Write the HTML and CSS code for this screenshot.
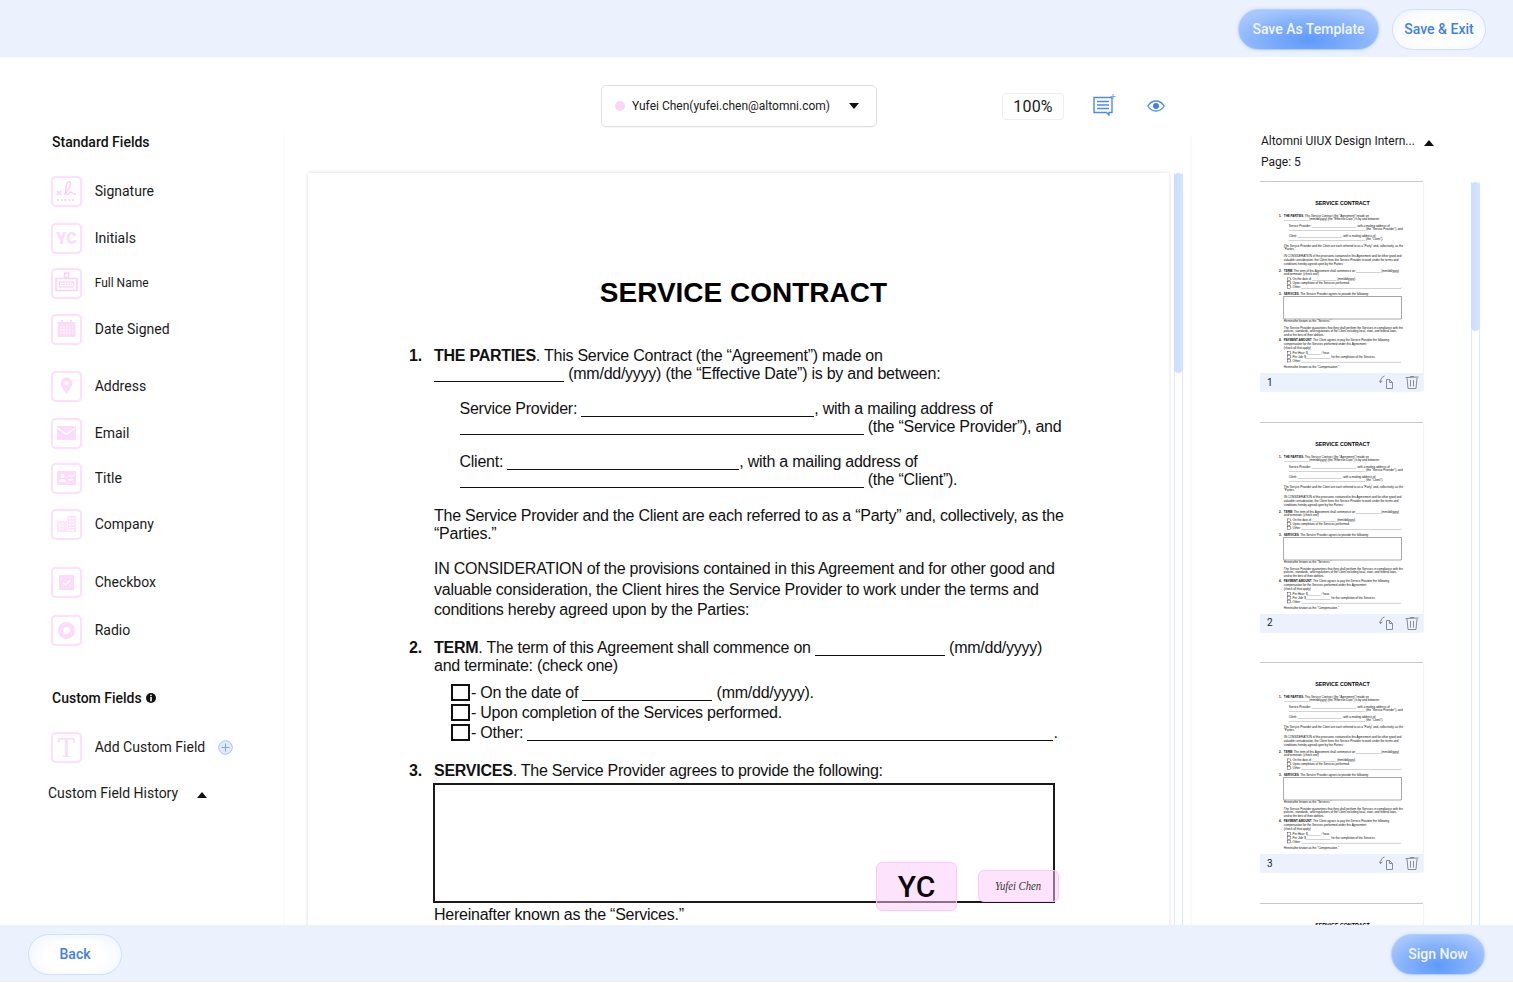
FILE: index.html
```html
<!DOCTYPE html>
<html lang="en">
<head>
<meta charset="utf-8">
<title>Service Contract - Prepare</title>
<link rel="stylesheet" href="styles.css">
</head>
<body>
<div class="app">
  <header class="topbar">
    <button class="btn btn-primary btn-template">Save As Template</button>
    <button class="btn btn-ghost btn-exit">Save &amp; Exit</button>
  </header>

  <main class="main">
    <aside class="left">
      <h2 class="heading">Standard Fields</h2>
      <div class="fields">
        <div class="field"><span class="ficon"><svg viewBox="0 0 27 27"><path class="st" d="M4 13l4 4M8 13l-4 4"/><path class="st" d="M11 17c3-3 8-10 6-13-3-2-5 6-4 11 1 4 4-1 5-1s1 3 5 2"/><path class="dots" d="M4 22h19"/></svg></span><span>Signature</span></div>
        <div class="field"><span class="ficon yc">YC</span><span>Initials</span></div>
        <div class="field small"><span class="ficon"><svg viewBox="0 0 27 27"><rect class="st" x="11.500" y="3" width="4" height="5"/><rect class="st" x="3" y="8.500" width="21" height="12"/><rect class="st thin" x="6.500" y="12" width="14" height="5"/><path class="dots tiny" d="M8 14.500h11"/></svg></span><span>Full Name</span></div>
        <div class="field"><span class="ficon"><svg viewBox="0 0 27 27"><rect class="fl" x="4.500" y="6" width="18" height="15"/><rect class="fl" x="8" y="4" width="2" height="4"/><rect class="fl" x="17" y="4" width="2" height="4"/><path class="wh-dots" d="M7 11h13M7 14h13M7 17h13"/></svg></span><span>Date Signed</span></div>
        <div class="field"><span class="ficon"><svg viewBox="0 0 27 27"><path class="fl" d="M13.500 20.500c-1-1.500-6-7-6-10a6 6 0 1 1 12 0c0 3-5 8.500-6 10z"/><circle class="wh" cx="13.500" cy="10.500" r="2.300"/></svg></span><span>Address</span></div>
        <div class="field"><span class="ficon"><svg viewBox="0 0 27 27"><rect class="fl" x="4" y="6" width="19" height="14" rx="1"/><path class="wl" d="M4.500 8l9 6 9-6"/></svg></span><span>Email</span></div>
        <div class="field"><span class="ficon"><svg viewBox="0 0 27 27"><rect class="fl" x="4" y="6" width="19" height="14" rx="1"/><circle class="wh" cx="9.500" cy="11" r="2"/><path class="wh" d="M6 17c0-4 7-4 7 0z"/><path class="wl" d="M15 11h5M15 14.500h5"/></svg></span><span>Title</span></div>
        <div class="field"><span class="ficon"><svg viewBox="0 0 27 27"><rect class="fl pale" x="4" y="10" width="10" height="11"/><rect class="fl pale" x="14.500" y="5" width="8.500" height="16"/><path class="wh-dots" d="M6 13h6M6 15.500h6M6 18h6M16 7.500h6M16 10.500h6M16 13.500h6M16 16.500h6M16 19.500h6"/></svg></span><span>Company</span></div>
        <div class="field"><span class="ficon"><svg viewBox="0 0 27 27"><rect class="fl" x="6" y="6" width="15" height="15" rx="1"/><path class="wl" d="M10 13.500l2.500 2.500 5-5"/></svg></span><span>Checkbox</span></div>
        <div class="field"><span class="ficon"><svg viewBox="0 0 27 27"><circle class="ring" cx="13.500" cy="13.500" r="6"/></svg></span><span>Radio</span></div>
      </div>

      <h2 class="heading heading-custom">Custom Fields <svg class="info" viewBox="0 0 10 10"><circle cx="5" cy="5" r="5"/><rect x="4.200" y="1.700" width="1.600" height="1.500"/><rect x="4.200" y="4" width="1.600" height="4.300"/></svg></h2>
      <div class="field add-field"><span class="ficon t-icon">T</span><span>Add Custom Field</span>
        <svg class="plus" viewBox="0 0 15 15"><circle cx="7.500" cy="7.500" r="6.800"/><path d="M7.500 3.500v8M3.500 7.500h8"/></svg></div>
      <div class="history"><span>Custom Field History</span><i class="tri up"></i></div>
    </aside>

    <section class="center">
      <div class="toolbar">
        <div class="signer"><i class="dot"></i><span class="signer-name">Yufei Chen(yufei.chen@altomni.com)</span><i class="tri down"></i></div>
        <div class="zoom">100%</div>
        <svg class="tool-note" viewBox="0 0 23 22"><path d="M1 3.500h18v15h-3v2.500l-2.500-2.500H1z"/><path d="M4 7.500h12M4 11h12M4 14.500h12"/><path class="plusline" d="M20 0v5M17.500 2.500h5"/></svg>
        <svg class="tool-eye" viewBox="0 0 18 12"><path d="M.8 6C3 2.500 6 1 9 1s6 1.500 8.200 5C15 9.500 12 11 9 11S3 9.500.8 6z"/><circle cx="9" cy="6" r="3"/></svg>
      </div>
      <div class="viewer">
        <div class="page-wrap">
          <article class="page">
            <h1 class="doc-title">SERVICE CONTRACT</h1>
            <div class="sec s1"><b class="num">1.</b><div class="body">
              <p><b>THE PARTIES</b>. This Service Contract (the “Agreement”) made on<br><span class="bl b130"></span> (mm/dd/yyyy) (the “Effective Date”) is by and between:</p>
              <p class="ind gap17">Service Provider: <span class="bl b233"></span>, with a mailing address of<br><span class="bl b404"></span> (the “Service Provider”), and</p>
              <p class="ind gap17">Client: <span class="bl b232"></span>, with a mailing address of<br><span class="bl b404"></span> (the “Client”).</p>
              <p class="gap18">The Service Provider and the Client are each referred to as a “Party” and, collectively, as the<br>“Parties.”</p>
              <p class="wide gap16">IN CONSIDERATION of the provisions contained in this Agreement and for other good and<br>valuable consideration, the Client hires the Service Provider to work under the terms and<br>conditions hereby agreed upon by the Parties:</p>
            </div></div>
            <div class="sec s2"><b class="num">2.</b><div class="body">
              <p><b>TERM</b>. The term of this Agreement shall commence on <span class="bl b130"></span> (mm/dd/yyyy)<br>and terminate: (check one)</p>
              <ul class="checks gap8">
                <li><i class="cb"></i>- On the date of <span class="bl b130"></span> (mm/dd/yyyy).</li>
                <li><i class="cb"></i>- Upon completion of the Services performed.</li>
                <li><i class="cb"></i>- Other: <span class="bl b526"></span>.</li>
              </ul>
            </div></div>
            <div class="sec s3"><b class="num">3.</b><div class="body">
              <p><b>SERVICES</b>. The Service Provider agrees to provide the following:</p>
              <div class="svc-box"></div>
              <p class="gap3">Hereinafter known as the “Services.”</p>
            </div></div>
            <div class="stamp stamp-yc">YC</div>
            <div class="stamp stamp-sig"><span>Yufei Chen</span></div>
          </article>
        </div>
        <div class="scroll scroll-doc"><i></i></div>
      </div>
    </section>

    <aside class="right">
      <div class="doc-name"><span>Altomni UIUX Design Intern...</span><i class="tri up"></i></div>
      <div class="page-count">Page: 5</div>
      <div class="thumb-area">
        <div class="thumbs">

          <div class="thumb">
            <div class="thumb-img"><article class="page mini">
              <h1 class="doc-title">SERVICE CONTRACT</h1>
              <div class="sec s1"><b class="num">1.</b><div class="body">
                <p><b>THE PARTIES</b>. This Service Contract (the “Agreement”) made on<br><span class="bl b130"></span> (mm/dd/yyyy) (the “Effective Date”) is by and between:</p>
                <p class="ind gap17">Service Provider: <span class="bl b233"></span>, with a mailing address of<br><span class="bl b404"></span> (the “Service Provider”), and</p>
                <p class="ind gap17">Client: <span class="bl b232"></span>, with a mailing address of<br><span class="bl b404"></span> (the “Client”).</p>
                <p class="gap18">The Service Provider and the Client are each referred to as a “Party” and, collectively, as the<br>“Parties.”</p>
                <p class="wide gap16">IN CONSIDERATION of the provisions contained in this Agreement and for other good and<br>valuable consideration, the Client hires the Service Provider to work under the terms and<br>conditions hereby agreed upon by the Parties:</p>
              </div></div>
              <div class="sec s2"><b class="num">2.</b><div class="body">
                <p><b>TERM</b>. The term of this Agreement shall commence on <span class="bl b130"></span> (mm/dd/yyyy)<br>and terminate: (check one)</p>
                <ul class="checks gap8">
                  <li><i class="cb"></i>- On the date of <span class="bl b130"></span> (mm/dd/yyyy).</li>
                  <li><i class="cb"></i>- Upon completion of the Services performed.</li>
                  <li><i class="cb"></i>- Other: <span class="bl b526"></span>.</li>
                </ul>
              </div></div>
              <div class="sec s3"><b class="num">3.</b><div class="body">
                <p><b>SERVICES</b>. The Service Provider agrees to provide the following:</p>
                <div class="svc-box"></div>
                <p class="gap3">Hereinafter known as the “Services.”</p>
                <p class="guar">The Service Provider guarantees that they shall perform the Services in compliance with the<br>policies, standards, and regulations of the Client including local, state, and federal laws,<br>and to the best of their abilities.</p>
              </div></div>
              <div class="sec s4"><b class="num">4.</b><div class="body">
                <p class="pay"><b>PAYMENT AMOUNT</b>. The Client agrees to pay the Service Provider the following<br>compensation for the Services performed under this Agreement:<br>(check all that apply)</p>
                <ul class="checks gap8">
                  <li><i class="cb"></i>- Per Hour: $<span class="bl b70"></span> / hour.</li>
                  <li><i class="cb"></i>- Per Job: $<span class="bl b130"></span> for the completion of the Services.</li>
                  <li><i class="cb"></i>- Other: <span class="bl b526"></span></li>
                </ul>
                <p class="gap16">Hereinafter known as the “Compensation.”</p>
              </div></div>
            </article></div>
            <div class="thumb-bar"><span>1</span><svg class="ti" viewBox="0 0 16 14"><path d="M7.500 4.500h3l3 3v6h-6z"/><path d="M10.500 4.500v3h3"/><path d="M5.500 1C3 1.500 1.500 4 1.500 7.500M.2 5.500l1.300 2.200 1.800-1.900"/></svg><svg class="ti trash" viewBox="0 0 14 14"><path d="M.5 2.500l13-.5M5 1.500h4M2 3l1 10.500h8L12 3M5.500 5v6.500M8.500 5v6.500"/></svg></div>
          </div>

          <div class="thumb">
            <div class="thumb-img"><article class="page mini">
              <h1 class="doc-title">SERVICE CONTRACT</h1>
              <div class="sec s1"><b class="num">1.</b><div class="body">
                <p><b>THE PARTIES</b>. This Service Contract (the “Agreement”) made on<br><span class="bl b130"></span> (mm/dd/yyyy) (the “Effective Date”) is by and between:</p>
                <p class="ind gap17">Service Provider: <span class="bl b233"></span>, with a mailing address of<br><span class="bl b404"></span> (the “Service Provider”), and</p>
                <p class="ind gap17">Client: <span class="bl b232"></span>, with a mailing address of<br><span class="bl b404"></span> (the “Client”).</p>
                <p class="gap18">The Service Provider and the Client are each referred to as a “Party” and, collectively, as the<br>“Parties.”</p>
                <p class="wide gap16">IN CONSIDERATION of the provisions contained in this Agreement and for other good and<br>valuable consideration, the Client hires the Service Provider to work under the terms and<br>conditions hereby agreed upon by the Parties:</p>
              </div></div>
              <div class="sec s2"><b class="num">2.</b><div class="body">
                <p><b>TERM</b>. The term of this Agreement shall commence on <span class="bl b130"></span> (mm/dd/yyyy)<br>and terminate: (check one)</p>
                <ul class="checks gap8">
                  <li><i class="cb"></i>- On the date of <span class="bl b130"></span> (mm/dd/yyyy).</li>
                  <li><i class="cb"></i>- Upon completion of the Services performed.</li>
                  <li><i class="cb"></i>- Other: <span class="bl b526"></span>.</li>
                </ul>
              </div></div>
              <div class="sec s3"><b class="num">3.</b><div class="body">
                <p><b>SERVICES</b>. The Service Provider agrees to provide the following:</p>
                <div class="svc-box"></div>
                <p class="gap3">Hereinafter known as the “Services.”</p>
                <p class="guar">The Service Provider guarantees that they shall perform the Services in compliance with the<br>policies, standards, and regulations of the Client including local, state, and federal laws,<br>and to the best of their abilities.</p>
              </div></div>
              <div class="sec s4"><b class="num">4.</b><div class="body">
                <p class="pay"><b>PAYMENT AMOUNT</b>. The Client agrees to pay the Service Provider the following<br>compensation for the Services performed under this Agreement:<br>(check all that apply)</p>
                <ul class="checks gap8">
                  <li><i class="cb"></i>- Per Hour: $<span class="bl b70"></span> / hour.</li>
                  <li><i class="cb"></i>- Per Job: $<span class="bl b130"></span> for the completion of the Services.</li>
                  <li><i class="cb"></i>- Other: <span class="bl b526"></span></li>
                </ul>
                <p class="gap16">Hereinafter known as the “Compensation.”</p>
              </div></div>
            </article></div>
            <div class="thumb-bar"><span>2</span><svg class="ti" viewBox="0 0 16 14"><path d="M7.500 4.500h3l3 3v6h-6z"/><path d="M10.500 4.500v3h3"/><path d="M5.500 1C3 1.500 1.500 4 1.500 7.500M.2 5.500l1.300 2.200 1.800-1.900"/></svg><svg class="ti trash" viewBox="0 0 14 14"><path d="M.5 2.500l13-.5M5 1.500h4M2 3l1 10.500h8L12 3M5.500 5v6.500M8.500 5v6.500"/></svg></div>
          </div>

          <div class="thumb">
            <div class="thumb-img"><article class="page mini">
              <h1 class="doc-title">SERVICE CONTRACT</h1>
              <div class="sec s1"><b class="num">1.</b><div class="body">
                <p><b>THE PARTIES</b>. This Service Contract (the “Agreement”) made on<br><span class="bl b130"></span> (mm/dd/yyyy) (the “Effective Date”) is by and between:</p>
                <p class="ind gap17">Service Provider: <span class="bl b233"></span>, with a mailing address of<br><span class="bl b404"></span> (the “Service Provider”), and</p>
                <p class="ind gap17">Client: <span class="bl b232"></span>, with a mailing address of<br><span class="bl b404"></span> (the “Client”).</p>
                <p class="gap18">The Service Provider and the Client are each referred to as a “Party” and, collectively, as the<br>“Parties.”</p>
                <p class="wide gap16">IN CONSIDERATION of the provisions contained in this Agreement and for other good and<br>valuable consideration, the Client hires the Service Provider to work under the terms and<br>conditions hereby agreed upon by the Parties:</p>
              </div></div>
              <div class="sec s2"><b class="num">2.</b><div class="body">
                <p><b>TERM</b>. The term of this Agreement shall commence on <span class="bl b130"></span> (mm/dd/yyyy)<br>and terminate: (check one)</p>
                <ul class="checks gap8">
                  <li><i class="cb"></i>- On the date of <span class="bl b130"></span> (mm/dd/yyyy).</li>
                  <li><i class="cb"></i>- Upon completion of the Services performed.</li>
                  <li><i class="cb"></i>- Other: <span class="bl b526"></span>.</li>
                </ul>
              </div></div>
              <div class="sec s3"><b class="num">3.</b><div class="body">
                <p><b>SERVICES</b>. The Service Provider agrees to provide the following:</p>
                <div class="svc-box"></div>
                <p class="gap3">Hereinafter known as the “Services.”</p>
                <p class="guar">The Service Provider guarantees that they shall perform the Services in compliance with the<br>policies, standards, and regulations of the Client including local, state, and federal laws,<br>and to the best of their abilities.</p>
              </div></div>
              <div class="sec s4"><b class="num">4.</b><div class="body">
                <p class="pay"><b>PAYMENT AMOUNT</b>. The Client agrees to pay the Service Provider the following<br>compensation for the Services performed under this Agreement:<br>(check all that apply)</p>
                <ul class="checks gap8">
                  <li><i class="cb"></i>- Per Hour: $<span class="bl b70"></span> / hour.</li>
                  <li><i class="cb"></i>- Per Job: $<span class="bl b130"></span> for the completion of the Services.</li>
                  <li><i class="cb"></i>- Other: <span class="bl b526"></span></li>
                </ul>
                <p class="gap16">Hereinafter known as the “Compensation.”</p>
              </div></div>
            </article></div>
            <div class="thumb-bar"><span>3</span><svg class="ti" viewBox="0 0 16 14"><path d="M7.500 4.500h3l3 3v6h-6z"/><path d="M10.500 4.500v3h3"/><path d="M5.500 1C3 1.500 1.500 4 1.500 7.500M.2 5.500l1.300 2.200 1.800-1.900"/></svg><svg class="ti trash" viewBox="0 0 14 14"><path d="M.5 2.500l13-.5M5 1.500h4M2 3l1 10.500h8L12 3M5.500 5v6.500M8.500 5v6.500"/></svg></div>
          </div>

          <div class="thumb">
            <div class="thumb-img"><article class="page mini">
              <h1 class="doc-title">SERVICE CONTRACT</h1>
            </article></div>
          </div>

        </div>
        <div class="scroll scroll-thumbs"><i></i></div>
      </div>
    </aside>
  </main>

  <footer class="footbar">
    <button class="btn btn-ghost btn-back">Back</button>
    <button class="btn btn-primary btn-sign">Sign Now</button>
  </footer>
</div>
</body>
</html>
```
FILE: styles.css
```css
* { box-sizing: border-box; }
html, body { margin: 0; padding: 0; background: #fff; }
body { font-family: Roboto, "Liberation Sans", sans-serif; font-size: 14px; color: #1a1a1a; overflow: hidden; }
.app { display: flex; flex-direction: column; height: 982px; width: 1513px; }

.topbar, .footbar { height: 57px; flex: none; background: #ebf1fd; display: flex; align-items: center; padding-top: 1px; }
.topbar { justify-content: flex-end; padding-right: 27px; gap: 13px; }
.footbar { justify-content: space-between; padding-left: 28px; padding-right: 28px; position: relative; z-index: 2; }

.btn { height: 41px; border-radius: 21px; font: 500 14px Roboto, sans-serif; padding: 0; cursor: pointer; }
.btn-primary { color: #f2f6ff; border: 1px solid #b3cffb; background: radial-gradient(ellipse 62% 85% at 50% 78%, #5f9afa 0%, #86b2fb 60%, #a8c8fc 100%); box-shadow: 0 0 3px rgba(150,185,250,.5); }
.btn-ghost { color: #3f7fe9; border: 1px solid #cfe0fa; background: radial-gradient(ellipse 70% 80% at 50% 55%, #fff 45%, #f3f7ff 80%, #e9f0fe 100%); }
.btn-template { width: 141px; }
.btn-exit { width: 94px; }
.btn-back, .btn-sign { width: 94px; }

.main { flex: 1; min-height: 0; display: flex; overflow: hidden; }

/* left column */
.left { width: 283px; flex: none; padding: 76px 0 0 52px; }
.heading { margin: 0; font: 500 14px/18px Roboto, sans-serif; color: #111; }
.fields { display: grid; grid-template-rows: 47px 45px 46px 57px 47px 45px 46px 58px 48px 31px; margin: 25px 0 0 -1px; }
.field { display: flex; align-items: flex-start; gap: 12.700px; line-height: 31px; color: #1a1a1a; }
.field.small > span:last-child { font-size: 12px; }
.ficon { width: 31px; height: 31px; flex: none; border: 2px solid #fde0fb; border-radius: 5px; box-shadow: 0 0 1px #fbd6f8; display: flex; align-items: center; justify-content: center; color: #fcdcf9; }
.ficon svg { width: 27px; height: 27px; display: block; }
.yc { font: 900 16px/1 Roboto, sans-serif; }
.t-icon { font: 400 26px/1 "DejaVu Serif", serif; }
.st { fill: none; stroke: #fcd0f7; stroke-width: 1.500; }
.st.thin { stroke-width: 1.200; }
.dots { fill: none; stroke: #fcd0f7; stroke-width: 1.800; stroke-dasharray: 1.800 2; }
.dots.tiny { stroke-width: 1.200; stroke-dasharray: 1.500 1; }
.fl { fill: #fcdcf9; }
.fl.pale { fill: #fde6fb; }
.wh { fill: #fff; }
.wl { fill: none; stroke: #fff; stroke-width: 1.500; }
.wh-dots { fill: none; stroke: #fff; stroke-width: 1.200; stroke-dasharray: 1.800 1.200; }
.ring { fill: none; stroke: #fcdcf9; stroke-width: 5; }

.heading-custom { margin: 43px 0 0; display: flex; align-items: center; gap: 4px; }
.info { width: 10px; height: 10px; display: block; }
.info circle { fill: #111; }
.info rect { fill: #fff; }
.add-field { margin: 25px 0 0 -1px; }
.plus { width: 15px; height: 15px; align-self: center; margin-left: 0; }
.plus circle { fill: #e1ebfd; stroke: #a6c4f7; stroke-width: 1; }
.plus path { stroke: #7ba6ef; stroke-width: 1; fill: none; }
.history { margin: 22px 0 0 -4px; display: flex; align-items: center; gap: 19px; line-height: 16px; }
.history .tri { margin-top: 3px; }

.tri { display: block; width: 0; height: 0; border-left: 5.500px solid transparent; border-right: 5.500px solid transparent; }
.tri.up { border-bottom: 6px solid #111; }
.tri.down { border-top: 6px solid #111; }

/* centre */
.center { width: 909px; flex: none; display: flex; flex-direction: column; min-height: 0; }
.toolbar { height: 78px; flex: none; padding: 28px 0 0 318px; display: flex; align-items: flex-start; }
.signer { width: 276px; height: 42px; border: 1px solid #e0e0e0; border-radius: 5px; display: flex; align-items: center; padding: 0 17px 0 13px; font-size: 12px; box-shadow: 0 1px 1px rgba(0,0,0,.04); }
.dot { width: 10px; height: 10px; border-radius: 50%; background: #fcd6f8; flex: none; margin-right: 7px; }
.signer-name { flex: 1; white-space: nowrap; }
.zoom { margin: 8px 0 0 125px; width: 62px; height: 27px; border: 1px solid #eee; border-radius: 4px; font-size: 16px; line-height: 25px; text-align: center; letter-spacing: .2px; }
.tool-note { width: 23px; height: 22px; margin: 9px 0 0 29px; }
.tool-note path { fill: none; stroke: #4d8aee; stroke-width: 1.400; }
.tool-note .plusline { stroke: #7aa7f2; stroke-width: 1; }
.tool-eye { width: 18px; height: 12px; margin: 15px 0 0 31px; }
.tool-eye path { fill: none; stroke: #4d8aee; stroke-width: 1.300; }
.tool-eye circle { fill: #3f7fe9; }

.viewer { flex: 1; min-height: 0; display: flex; border-left: 2px solid #f8faff; border-right: 2px solid #f8faff; padding: 38px 0 0 23px; overflow: hidden; }
.page-wrap { width: 861px; flex: none; padding: 0; }
.page { position: relative; width: 861px; height: 1104px; flex: none; background: #fff; padding: 104px 91px 0 101px; font: 16px/18px "Liberation Sans", Arial, sans-serif; letter-spacing: -.25px; color: #111; white-space: nowrap; box-shadow: 0 0 4px rgba(0,0,0,.15); }
.page p { margin: 0; }
.doc-title { margin: 0; font: 700 28px/32px "Liberation Sans", Arial, sans-serif; letter-spacing: 0; text-align: center; color: #000; }
.sec { display: flex; }
.num { width: 25px; flex: none; }
.body { flex: 1; min-width: 0; }
.s1 { margin-top: 38px; }
.s2 { margin-top: 18.500px; }
.s3 { margin-top: 19px; }
.s4 { margin-top: 9.500px; }
.ind { padding-left: 25.500px; }
.gap17 { margin-top: 17px !important; }
.gap18 { margin-top: 18px !important; }
.gap16 { margin-top: 16px !important; }
.gap3 { margin-top: 3px !important; }
.wide { line-height: 20.500px; }
.guar { margin-top: 13.500px !important; line-height: 19px; }
.pay { line-height: 20px; }
.bl { display: inline-block; border-bottom: 1.500px solid #111; height: 1px; vertical-align: -2.500px; }
.b70 { width: 70px; }
.b130 { width: 130px; }
.b232 { width: 232px; }
.b233 { width: 233px; }
.b404 { width: 404px; }
.b526 { width: 526px; }
.checks { list-style: none; margin: 0; padding: 0 0 0 17px; }
.gap8 { margin-top: 8px; }
.checks li { height: 20px; line-height: 20px; }
.cb { display: inline-block; width: 19px; height: 17px; border: 2px solid #111; margin-right: 1px; vertical-align: -3px; }
.svc-box { height: 120px; width: 622px; margin: 3px 0 0 -1px; border: 2px solid #1a1a1a; }

.stamp { position: absolute; background: rgba(253, 200, 250, .5); border: 1px solid #fcc8f8; border-radius: 6px; display: flex; align-items: center; justify-content: center; letter-spacing: 0; }
.stamp-yc { left: 568px; top: 689px; width: 81px; height: 49px; font: 500 30px/1 Roboto, sans-serif; color: #0a0a0a; }
.stamp-sig { left: 670px; top: 697px; width: 81px; height: 32px; font: italic 12.500px/1 "Liberation Serif", serif; color: #333; }
.stamp-sig span { display: block; transform: scaleX(.85); }

.scroll { flex: none; width: 9px; position: relative; border-left: 1px solid #dce8fd; border-right: 1px solid #dce8fd; }
.scroll i { position: absolute; left: -1px; right: -1px; top: 0; background: linear-gradient(90deg, #c9ddfd, #d6e5fe); border-radius: 5px; }
.scroll-doc { margin-left: 5px; }
.scroll-doc i { height: 200px; }
.scroll-thumbs i { height: 149px; }

/* right */
.right { flex: 1; min-width: 0; padding: 76px 0 0 69px; display: flex; flex-direction: column; }
.doc-name { display: flex; align-items: center; gap: 9px; font-size: 12px; line-height: 16px; }
.doc-name .tri { margin-top: 3px; }
.page-count { font-size: 12px; line-height: 16px; margin-top: 5px; }
.thumb-area { flex: 1; min-height: 0; display: flex; margin: 11px 0 0 -1px; padding-top: 1px; gap: 48px; overflow: hidden; }
.thumbs { width: 163px; flex: none; display: flex; flex-direction: column; gap: 31.500px; }
.thumb { width: 163px; height: 209px; flex: none; box-shadow: 0 -1px 0 #c9c9c9, 0 0 2px rgba(0,0,0,.15); display: flex; flex-direction: column; }
.thumb-img { height: 191px; flex: none; overflow: hidden; }
.page.mini { transform: translateY(-1px) scale(.1893); transform-origin: 0 0; box-shadow: none; }
.thumb-bar { flex: 1; background: #ebf1fd; display: flex; align-items: center; padding: 0 4.500px 0 7px; font-size: 10px; }
.thumb-bar span { flex: 1; }
.ti { width: 16px; height: 14px; }
.ti path { fill: none; stroke: #808080; stroke-width: .9; }
.trash { width: 14px; margin-left: 10px; }
```
